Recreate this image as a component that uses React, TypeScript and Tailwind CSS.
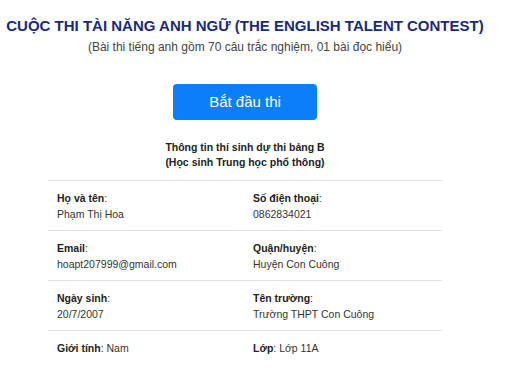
import React from "react";

const rows: [string, string, string, string][] = [
  ["Họ và tên", "Phạm Thị Hoa", "Số điện thoại", "0862834021"],
  ["Email", "hoapt207999@gmail.com", "Quận/huyện", "Huyện Con Cuông"],
  ["Ngày sinh", "20/7/2007", "Tên trường", "Trường THPT Con Cuông"],
];

export default function App() {
  return (
    <div className="w-[505px] h-[380px] bg-white overflow-hidden" style={{ fontFamily: '"Liberation Sans", Arial, sans-serif' }}>
      <div className="w-[490px] flex flex-col items-center">
        <h1 className="mt-[16px] text-[15px] leading-[20px] font-bold text-[#1a2b74] whitespace-nowrap">
          CUỘC THI TÀI NĂNG ANH NGỮ (THE ENGLISH TALENT CONTEST)
        </h1>
        <p className="mt-[3px] text-[12px] leading-[16px] text-[#444]">
          (Bài thi tiếng anh gồm 70 câu trắc nghiệm, 01 bài đọc hiểu)
        </p>
        <button className="mt-[29px] w-[144px] h-[36px] rounded-[4px] bg-[#0d7efa] text-white text-[15px] leading-[20px]">
          Bắt đầu thi
        </button>
        <div className="mt-[20px] text-[10.5px] leading-[15px] font-bold text-[#222] text-center">
          <div>Thông tin thí sinh dự thi bảng B</div>
          <div>(Học sinh Trung học phổ thông)</div>
        </div>
        <div className="mt-[10px] w-[394px] text-[10.5px] leading-[16px] text-[#333]">
          {rows.map((r, i) => (
            <div key={i} className="grid grid-cols-2 border-t border-[#e3e3e3] h-[50px] pt-[9px]">
              <div className="px-[9px]">
                <div><span className="font-bold text-[#222]">{r[0]}</span>:</div>
                <div>{r[1]}</div>
              </div>
              <div className="px-[8px]">
                <div><span className="font-bold text-[#222]">{r[2]}</span>:</div>
                <div>{r[3]}</div>
              </div>
            </div>
          ))}
          <div className="grid grid-cols-2 border-t border-[#e3e3e3] pt-[9px]">
            <div className="px-[9px]"><span className="font-bold text-[#222]">Giới tính</span>: Nam</div>
            <div className="px-[8px]"><span className="font-bold text-[#222]">Lớp</span>: Lớp 11A</div>
          </div>
        </div>
      </div>
    </div>
  );
}
